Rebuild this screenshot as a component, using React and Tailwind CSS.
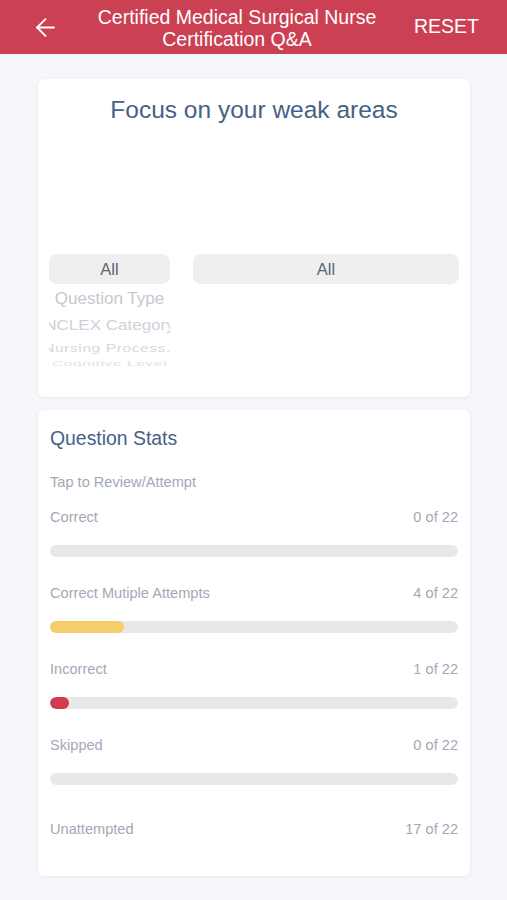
import { ArrowLeft } from "lucide-react";

const stats = [
  { label: "Correct", done: 0, color: "" },
  { label: "Correct Mutiple Attempts", done: 4, color: "bg-[#f6cd6b]" },
  { label: "Incorrect", done: 1, color: "bg-[#d23b4f]" },
  { label: "Skipped", done: 0, color: "" },
];

const TOTAL = 22;

const Header = () => (
  <div className="flex items-center h-[54px] bg-[#cb4153] text-white">
    <button className="flex items-center justify-center w-[80px] pl-[10px] h-full">
      <ArrowLeft size={29} strokeWidth={1.5} />
    </button>
    <div className="flex-1 text-center text-[19.5px] leading-[22px] mt-[1px] whitespace-nowrap">
      Certified Medical Surgical Nurse
      <br />
      Certification Q&amp;A
    </div>
    <div className="w-[113px] pl-[20px] text-[19.5px] leading-none">RESET</div>
  </div>
);

const FocusCard = () => (
  <div className="h-[318px] bg-white rounded-md shadow-[0_1px_4px_rgba(0,0,0,0.06)] px-[11px] pt-[17px]">
    <div className="text-center text-[24.5px] leading-[28px] text-[#476186]">Focus on your weak areas</div>
    <div className="flex gap-[23px] mt-[130px]">
      <div className="w-[121px] overflow-hidden">
        <div className="flex items-center justify-center h-[30px] rounded-lg bg-[#efeff0] text-[16.5px] text-[#5d6575]">
          All
        </div>
        {/* picker wheel, rows squash as they roll away */}
        <div className="flex flex-col items-center text-[#c3c8d0] whitespace-nowrap">
          <div className="mt-[5px] text-[17px] leading-[20px]">Question Type</div>
          <div className="mt-[7px] text-[17px] leading-[20px] scale-y-[0.85] opacity-80">NCLEX Category</div>
          <div className="mt-[3px] text-[15.5px] leading-[18px] scale-y-[0.7] tracking-[0.6px] opacity-70">Nursing Process..</div>
          <div className="-mt-[1px] text-[15.5px] leading-[14px] scale-y-[0.5] tracking-[0.6px] opacity-50">Cognitive Level</div>
        </div>
      </div>
      <div className="flex-1">
        <div className="flex items-center justify-center h-[30px] rounded-lg bg-[#efeff0] text-[16.5px] text-[#5d6575]">
          All
        </div>
      </div>
    </div>
  </div>
);

const StatRow = ({ label, done, color, bar = true }) => (
  <div>
    <div className="flex justify-between text-[14.6px] leading-[17px] text-[#a3a8b6]">
      <span>{label}</span>
      <span>
        {done} of {TOTAL}
      </span>
    </div>
    {bar && (
      <div className="mt-[19px] h-[12px] rounded-full bg-[#e8e8e9] overflow-hidden">
        {done > 0 && (
          <div className={`h-full rounded-full ${color}`} style={{ width: `${(done / TOTAL) * 100}%` }} />
        )}
      </div>
    )}
  </div>
);

const StatsCard = () => (
  <div className="bg-white rounded-md shadow-[0_1px_4px_rgba(0,0,0,0.06)] px-[12px] pt-[17px] pb-[38px]">
    <div className="text-[19.4px] leading-[22px] text-[#476186]">Question Stats</div>
    <div className="mt-[25px] text-[14.6px] leading-[17px] text-[#a3a8b6]">Tap to Review/Attempt</div>
    <div className="flex flex-col gap-[28px] mt-[18px]">
      {stats.map(s => (
        <StatRow key={s.label} {...s} />
      ))}
    </div>
    <div className="mt-[36px]">
      <StatRow label="Unattempted" done={17} bar={false} />
    </div>
  </div>
);

export default function App() {
  return (
    <div className="min-h-[900px] bg-[#f6f7fb] font-['Liberation_Sans',Arial,sans-serif]">
      <Header />
      <div className="flex flex-col gap-[13px] px-[38px] pt-[25px] pb-[24px] w-[508px]">
        <FocusCard />
        <StatsCard />
      </div>
    </div>
  );
}
